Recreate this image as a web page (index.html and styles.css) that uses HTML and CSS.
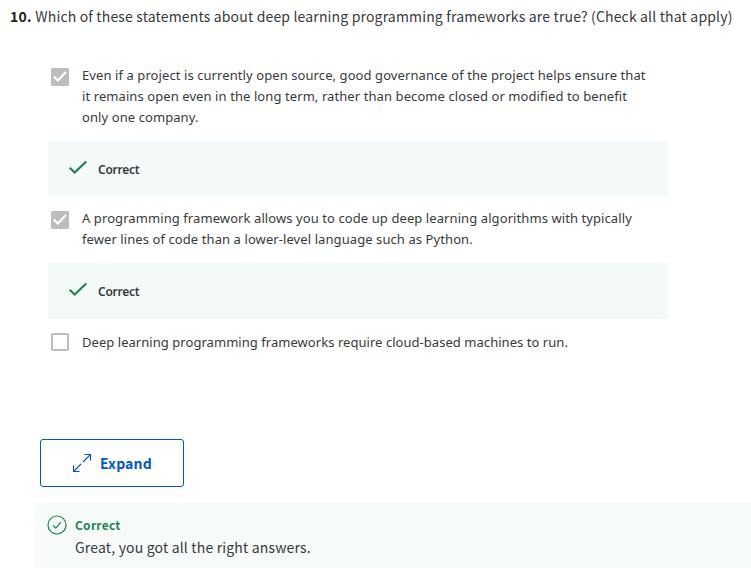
FILE: index.html
```html
<!DOCTYPE html>
<html lang="en">
<head>
<meta charset="utf-8">
<title>Quiz</title>
<link rel="stylesheet" href="styles.css">
</head>
<body>
<main class="quiz">
  <h1 class="question"><b class="num">10.</b> <span class="qtext">Which of these statements about deep learning programming frameworks are true? (Check all that apply)</span></h1>
  <section class="options">
    <div class="option first">
      <svg class="box" viewBox="0 0 18 18"><rect width="18" height="18" rx="1.500" fill="#bdbdbd"/><path d="M2.800 8.500l4 4L15 4" fill="none" stroke="#fff" stroke-width="2"/></svg>
      <p class="lines"><span class="l1">Even if a project is currently open source, good governance of the project helps ensure that</span><span class="l2">it remains open even in the long term, rather than become closed or modified to benefit</span><span class="l3">only one company.</span></p>
    </div>
    <div class="feedback"><svg class="tick" viewBox="0 0 20 16"><path d="M1.700 7.700l5 4.800L18.200 1.500" fill="none" stroke="#1f8354" stroke-width="2.200"/></svg><span class="ok">Correct</span></div>
    <div class="option second">
      <svg class="box" viewBox="0 0 18 18"><rect width="18" height="18" rx="1.500" fill="#bdbdbd"/><path d="M2.800 8.500l4 4L15 4" fill="none" stroke="#fff" stroke-width="2"/></svg>
      <p class="lines"><span class="l4">A programming framework allows you to code up deep learning algorithms with typically</span><span class="l5">fewer lines of code than a lower-level language such as Python.</span></p>
    </div>
    <div class="feedback"><svg class="tick" viewBox="0 0 20 16"><path d="M1.700 7.700l5 4.800L18.200 1.500" fill="none" stroke="#1f8354" stroke-width="2.200"/></svg><span class="ok">Correct</span></div>
    <div class="option third">
      <svg class="box" viewBox="0 0 18 18"><rect x="1" y="1" width="16" height="16" rx="1" fill="#fff" stroke="#bdbdbd" stroke-width="2"/></svg>
      <p class="lines"><span class="l6">Deep learning programming frameworks require cloud-based machines to run.</span></p>
    </div>
  </section>
  <button class="expand"><svg class="arrows" viewBox="0 0 20 20"><path d="M11 9l7-7M12.500 1.500h6v6M9 11l-7 7M1.500 12.500v6h6" fill="none" stroke="#0056d2" stroke-width="1.100"/></svg><span class="exp">Expand</span></button>
  <section class="result">
    <svg class="circle" viewBox="0 0 20 20"><circle cx="10" cy="10" r="9" fill="none" stroke="#1f8354" stroke-width="1.200"/><path d="M6 10.500l2.800 2.700 5-6" fill="none" stroke="#1f8354" stroke-width="1.200"/></svg>
    <div class="rtext"><strong class="rt">Correct</strong><span class="rm">Great, you got all the right answers.</span></div>
  </section>
</main>
</body>
</html>
```
FILE: styles.css
```css
* { box-sizing: border-box; }
body { margin: 0; background: #fff; color: #373a3c; font-family: "Noto Sans CJK SC", sans-serif; overflow: hidden; }
.quiz { height: 568px; display: flex; flex-direction: column; align-items: flex-start; }
.question { margin: 0; padding: 5px 0 0 10px; font-size: 14px; font-weight: 400; line-height: 22px; white-space: nowrap; height: 65px; letter-spacing: .16px; }
.num { color: #1f1f1f; letter-spacing: .3px; }
.options { margin-left: 48px; width: 620px; font-family: "Noto Sans", sans-serif; }
.option { display: flex; padding-left: 3px; }
.first { height: 76px; }
.second { height: 66px; padding-top: 11px; }
.third { padding-top: 13px; }
.box { width: 18px; height: 18px; margin: 3px 13px 0 0; flex: none; }
.third .box { margin-top: 1px; }
.lines { margin: 0; font-size: 13px; line-height: 21px; white-space: nowrap; letter-spacing: .085px; }
.l6 { letter-spacing: .045px; }
.lines span { display: block; }
.feedback { height: 56px; background: #f3faf8; display: flex; align-items: center; padding-left: 20px; gap: 10px; font-size: 12px; font-weight: 600; letter-spacing: -.25px; }
.tick { width: 20px; height: 16px; margin-top: -2px; }
.expand { margin: 86px 0 0 40px; width: 144px; height: 48px; border: 1px solid #0056d2; border-radius: 3px; background: #fff; color: #0056d2; display: flex; align-items: center; padding: 0 0 0 31px; gap: 8px; font: 700 14px "Noto Sans CJK SC", sans-serif; letter-spacing: .15px; }
.arrows { width: 20px; height: 20px; }
.result { margin: 16px 0 0 35px; width: 716px; height: 65px; background: #f6fbfa; display: flex; padding: 11px 12px; gap: 8px; }
.circle { width: 20px; height: 20px; flex: none; margin-top: 1px; }
.rtext { display: flex; flex-direction: column; font-size: 14px; line-height: 22px; letter-spacing: .165px; }
.rt { font-size: 12px; color: #1f8354; letter-spacing: .25px; line-height: 21px; margin-bottom: 1px; }
```
